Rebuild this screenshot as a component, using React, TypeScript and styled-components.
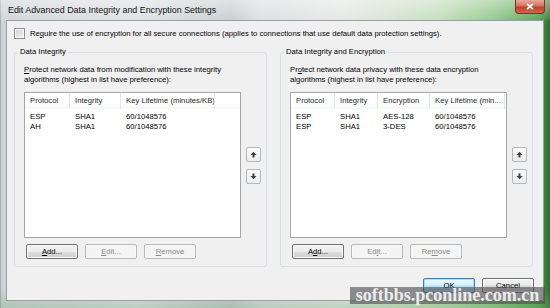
import React from "react";
import styled, { createGlobalStyle } from "styled-components";

const GlobalStyle = createGlobalStyle`
  html, body {
    margin: 0;
    padding: 0;
    background: #ffffff;
  }
  body {
    font-family: "Liberation Sans", Arial, sans-serif;
    font-size: 7.7px;
    color: #000;
  }
`;

type Column = { title: string; width: number };

const integrityColumns: Column[] = [
  { title: "Protocol", width: 45 },
  { title: "Integrity", width: 51 },
  { title: "Key Lifetime (minutes/KB)", width: 94 },
];

const integrityRows = [
  ["ESP", "SHA1", "60/1048576"],
  ["AH", "SHA1", "60/1048576"],
];

const encryptionColumns: Column[] = [
  { title: "Protocol", width: 44 },
  { title: "Integrity", width: 43 },
  { title: "Encryption", width: 52 },
  { title: "Key Lifetime (min...", width: 75 },
];

const encryptionRows = [
  ["ESP", "SHA1", "AES-128", "60/1048576"],
  ["ESP", "SHA1", "3-DES", "60/1048576"],
];

const Arrow = ({ down }: { down?: boolean }) => (
  <svg width="7" height="7" viewBox="0 0 7 7" style={{ transform: down ? "rotate(180deg)" : undefined }}>
    <path d="M3.5 0.8 L6.6 3.9 H4.5 V6.4 H2.5 V3.9 H0.4 Z" fill="#404040" />
  </svg>
);

const ListView = ({ columns, rows }: { columns: Column[]; rows: string[][] }) => {
  const template = columns.map((c) => `${c.width}px`).join(" ") + " 1fr";
  return (
    <ListBox>
      <HeaderRow $columns={template}>
        {columns.map((c) => (
          <HeaderCell key={c.title}>{c.title}</HeaderCell>
        ))}
        <HeaderCell $last />
      </HeaderRow>
      <Rows>
        {rows.map((r, i) => (
          <DataRow key={i} $columns={template}>
            {r.map((v, j) => (
              <Cell key={j}>{v}</Cell>
            ))}
          </DataRow>
        ))}
      </Rows>
    </ListBox>
  );
};

const Group = ({
  title,
  children,
  columns,
  rows,
  keys,
}: {
  title: string;
  children: React.ReactNode;
  columns: Column[];
  rows: string[][];
  keys: { add: number; edit: number; remove: number };
}) => (
  <GroupBox>
    <Legend>{title}</Legend>
    <Description>{children}</Description>
    <ListRow>
      <ListView columns={columns} rows={rows} />
      <ArrowColumn>
        <ArrowButton>
          <Arrow />
        </ArrowButton>
        <ArrowButton>
          <Arrow down />
        </ArrowButton>
      </ArrowColumn>
    </ListRow>
    <ButtonRow>
      <Button>{mnemonic("Add...", keys.add)}</Button>
      <Button disabled>{mnemonic("Edit...", keys.edit)}</Button>
      <Button disabled>{mnemonic("Remove", keys.remove)}</Button>
    </ButtonRow>
  </GroupBox>
);

const mnemonic = (text: string, at: number) => (
  <>
    {text.slice(0, at)}
    <u>{text[at]}</u>
    {text.slice(at + 1)}
  </>
);

export default function App() {
  return (
    <>
      <GlobalStyle />
      <Window>
        <TitleBar>
          <Title>Edit Advanced Data Integrity and Encryption Settings</Title>
          <CloseButton>
            <svg width="8" height="7" viewBox="0 0 8 7">
              <path d="M1 0.8 L7 6.2 M7 0.8 L1 6.2" stroke="#ffffff" strokeWidth="1.8" />
            </svg>
          </CloseButton>
        </TitleBar>
        <Frame>
          <Client>
            <CheckRow>
              <CheckBox />
              <span>
                Re<u>q</u>uire the use of encryption for all secure connections (applies to connections that use
                default data protection settings).
              </span>
            </CheckRow>
            <Groups>
              <Group title="Data Integrity" columns={integrityColumns} rows={integrityRows} keys={{ add: 0, edit: 0, remove: 0 }}>
                <u>P</u>rotect network data from modification with these integrity
                <br />
                algorithms (highest in list have preference):
              </Group>
              <Group
                title="Data Integrity and Encryption"
                columns={encryptionColumns}
                rows={encryptionRows}
                keys={{ add: 1, edit: 2, remove: 2 }}
              >
                Pr<u>o</u>tect network data privacy with these data encryption
                <br />
                algorithms (highest in list have preference):
              </Group>
            </Groups>
            <Footer>
              <Button $default>OK</Button>
              <Button>Cancel</Button>
            </Footer>
          </Client>
        </Frame>
        <Watermark>softbbs.pconline.com.cn</Watermark>
      </Window>
    </>
  );
}

const Window = styled.div`
  position: relative;
  width: 550px;
  height: 308px;
  display: flex;
  flex-direction: column;
  overflow: hidden;
  background: linear-gradient(
    90deg,
    #7c8386 0,
    #cdd2d3 1px,
    #dde0e1 25%,
    #c6cacb 42%,
    #d9dcdd 47%,
    #e4e7e5 62%,
    #bfdbb8 80%,
    #8cc383 90%,
    #4f9c49 98%,
    #2f6e2c 100%
  );
`;

const TitleBar = styled.div`
  height: 20px;
  display: flex;
  justify-content: space-between;
  align-items: flex-start;
  padding: 0 5px 0 8px;
  background: linear-gradient(180deg, rgba(255, 255, 255, 0.45), rgba(255, 255, 255, 0.1));
`;

const Title = styled.div`
  font-size: 8.9px;
  line-height: 20px;
  color: #111;
  white-space: nowrap;
`;

const CloseButton = styled.div`
  width: 30px;
  height: 14px;
  display: flex;
  align-items: center;
  justify-content: center;
  box-sizing: border-box;
  border: 1px solid #7a3326;
  border-top: none;
  border-radius: 0 0 4px 4px;
  background: linear-gradient(180deg, #e9a99a 0%, #d6705c 45%, #c2412a 55%, #d0654c 100%);
`;

const Frame = styled.div`
  flex: 1;
  display: flex;
  padding: 0 6px 7px 6px;
  background: linear-gradient(180deg, transparent 0, transparent 270px, rgba(120, 170, 120, 0.35) 100%);
`;

const Client = styled.div`
  flex: 1;
  display: flex;
  flex-direction: column;
  padding: 7px 10px 0 7px;
  background: #f0f0f0;
  border: 1px solid #98a0a4;
`;

const CheckRow = styled.div`
  display: flex;
  align-items: center;
  gap: 5px;
  height: 11px;
  white-space: nowrap;
`;

const CheckBox = styled.div`
  width: 11px;
  height: 11px;
  box-sizing: border-box;
  border: 1px solid #8e8f8f;
  box-shadow: inset 0 0 0 1px #f6f6f6;
  background: linear-gradient(135deg, #cfcfcf, #f7f7f7);
  flex: none;
`;

const Groups = styled.div`
  display: grid;
  grid-template-columns: 253px 253px;
  gap: 13px;
  margin-top: 8px;
`;

const GroupBox = styled.fieldset`
  margin: 0;
  min-width: 0;
  box-sizing: border-box;
  border: 1px solid #d5dfe5;
  border-radius: 3px;
  padding: 0 5px 7px 9px;
`;

const Legend = styled.legend`
  font-size: 7.7px;
  line-height: 10px;
  padding: 0 2px;
  margin-left: -6px;
`;

const Description = styled.div`
  margin-top: 8px;
  line-height: 10px;
  white-space: nowrap;
`;

const ListRow = styled.div`
  display: flex;
  gap: 5px;
  margin-top: 7px;
`;

const ListBox = styled.div`
  width: 219px;
  height: 146px;
  box-sizing: border-box;
  border: 1px solid #a3a7aa;
  background: #ffffff;
  overflow: hidden;
`;

const HeaderRow = styled.div<{ $columns: string }>`
  display: grid;
  grid-template-columns: ${(p) => p.$columns};
  height: 16px;
  background: linear-gradient(180deg, #ffffff 0%, #ffffff 60%, #f6f7f8 100%);
`;

const HeaderCell = styled.div<{ $last?: boolean }>`
  padding-left: 5px;
  line-height: 16px;
  white-space: nowrap;
  overflow: hidden;
  color: #2a2a2a;
  border-right: ${(p) => (p.$last ? "none" : "1px solid #e3e5e7")};
`;

const Rows = styled.div`
  padding-top: 3px;
`;

const DataRow = styled.div<{ $columns: string }>`
  display: grid;
  grid-template-columns: ${(p) => p.$columns};
  height: 10px;
  line-height: 10px;
`;

const Cell = styled.div`
  padding-left: 5px;
  white-space: nowrap;
`;

const ArrowColumn = styled.div`
  display: flex;
  flex-direction: column;
  justify-content: center;
  gap: 7px;
`;

const ArrowButton = styled.div`
  width: 15px;
  height: 15px;
  box-sizing: border-box;
  display: flex;
  align-items: center;
  justify-content: center;
  border: 1px solid #b4b8bb;
  border-radius: 2px;
  background: linear-gradient(180deg, #fbfbfb, #ececec);
`;

const ButtonRow = styled.div`
  display: flex;
  gap: 7px;
  margin-top: 6px;
  padding-left: 2px;
`;

const Button = styled.div<{ disabled?: boolean; $default?: boolean }>`
  width: 52px;
  height: 15px;
  box-sizing: border-box;
  display: flex;
  align-items: center;
  justify-content: center;
  border-radius: 2px;
  font-size: 7.7px;
  color: ${(p) => (p.disabled ? "#8a8a8a" : "#000")};
  border: 1px solid ${(p) => (p.disabled ? "#b5b9bc" : p.$default ? "#3c7fb1" : "#707070")};
  box-shadow: inset 0 0 0 1px ${(p) => (p.$default ? "#9fe3f7" : p.disabled ? "#f7f7f7" : "#fbfbfb")};
  background: ${(p) =>
    p.disabled
      ? "#f4f4f4"
      : p.$default
      ? "linear-gradient(180deg, #eaf6fd 0%, #d9f0fc 50%, #bee6fd 50%, #a7d9f5 100%)"
      : "linear-gradient(180deg, #f2f2f2 0%, #ebebeb 50%, #dddddd 50%, #cfcfcf 100%)"};
`;

const Footer = styled.div`
  display: flex;
  justify-content: flex-end;
  gap: 7px;
  margin-top: 11px;
  margin-right: -1px;
`;

const Watermark = styled.div`
  position: absolute;
  right: 5px;
  bottom: 4px;
  width: 195px;
  height: 17px;
  background: rgba(72, 72, 72, 0.6);
  color: #ececec;
  font-family: "Liberation Serif", "Times New Roman", serif;
  font-weight: bold;
  font-size: 18px;
  line-height: 17px;
  text-align: center;
  white-space: nowrap;
`;
